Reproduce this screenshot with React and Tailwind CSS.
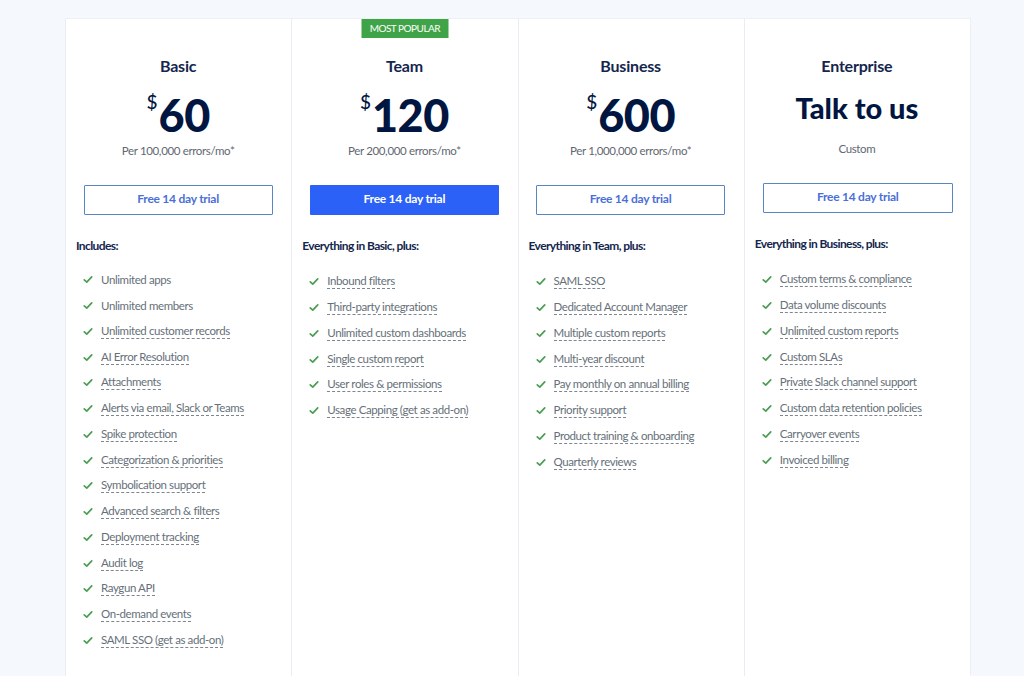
import React from "react";

const plans = [
  {
    name: "Basic",
    price: "60",
    note: "Per 100,000 errors/mo*",
    heading: "Includes:",
    plain: 2,
    items: [
      "Unlimited apps",
      "Unlimited members",
      "Unlimited customer records",
      "AI Error Resolution",
      "Attachments",
      "Alerts via email, Slack or Teams",
      "Spike protection",
      "Categorization & priorities",
      "Symbolication support",
      "Advanced search & filters",
      "Deployment tracking",
      "Audit log",
      "Raygun API",
      "On-demand events",
      "SAML SSO (get as add-on)",
    ],
  },
  {
    name: "Team",
    price: "120",
    note: "Per 200,000 errors/mo*",
    heading: "Everything in Basic, plus:",
    popular: true,
    items: [
      "Inbound filters",
      "Third-party integrations",
      "Unlimited custom dashboards",
      "Single custom report",
      "User roles & permissions",
      "Usage Capping (get as add-on)",
    ],
  },
  {
    name: "Business",
    price: "600",
    note: "Per 1,000,000 errors/mo*",
    heading: "Everything in Team, plus:",
    items: [
      "SAML SSO",
      "Dedicated Account Manager",
      "Multiple custom reports",
      "Multi-year discount",
      "Pay monthly on annual billing",
      "Priority support",
      "Product training & onboarding",
      "Quarterly reviews",
    ],
  },
  {
    name: "Enterprise",
    heading: "Everything in Business, plus:",
    custom: true,
    note: "Custom",
    items: [
      "Custom terms & compliance",
      "Data volume discounts",
      "Unlimited custom reports",
      "Custom SLAs",
      "Private Slack channel support",
      "Custom data retention policies",
      "Carryover events",
      "Invoiced billing",
    ],
  },
];

const Check = () => (
  <svg viewBox="0 0 12 10" className="w-[10px] h-[9px] shrink-0 mr-2 text-[#4a9d52]" fill="none" stroke="currentColor" strokeWidth="2" strokeLinecap="round" strokeLinejoin="round">
    <path d="M1.5 5.5L4.5 8.2L10.5 1.8" />
  </svg>
);

const PlanColumn = ({ plan }) => (
  <div className="relative w-1/4 h-[657px] overflow-hidden pl-[10px] pr-[11px] border-l border-[#e9edf3]">
    {plan.popular && (
      <div className="absolute top-0 left-1/2 -translate-x-1/2 w-[87px] h-[19px] bg-[#3fa447] text-white text-[10px] tracking-[-0.5px] leading-[19px] text-center whitespace-nowrap">
        MOST POPULAR
      </div>
    )}
    <h2 className="mt-[37px] text-center text-[16px] tracking-[-0.2px] leading-[20px] font-bold text-[#14264d]">{plan.name}</h2>
    {plan.custom ? (
      <div className="mt-[12px] h-[40px] text-center text-[29px] leading-[40px] font-black text-[#001641]">Talk to us</div>
    ) : (
      <div className="mt-[14px] h-[50px] flex justify-center text-[#001641]">
        <span className="text-[19px] leading-[20px] font-medium mt-[2px] mr-[1px]">$</span>
        <span className="text-[45px] tracking-[-0.5px] leading-[50px] font-black">{plan.price}</span>
      </div>
    )}
    <p className={`text-center text-[11.5px] tracking-[-0.35px] leading-[16px] text-[#5f6872] ${plan.custom ? "mt-[13px]" : "mt-[3px]"}`}>{plan.note}</p>
    <button
      type="button"
      className={`block h-[30px] pb-[3px] rounded-[1px] text-[12px] tracking-[-0.25px] font-bold mt-[26px] ${plan.custom ? "w-[190px] ml-[8px]" : "w-[189px] mx-auto"} ${
        plan.popular ? "bg-[#2b61f6] text-white" : "bg-white border border-[#5a84c8] text-[#4a6fd8]"
      }`}
    >
      Free 14 day trial
    </button>
    <h3 className="mt-[23px] text-[12px] tracking-[-0.6px] leading-[15px] font-bold text-[#14264d]">{plan.heading}</h3>
    <ul className={`${plan.name === "Basic" ? "mt-[14px]" : "mt-[16px]"} ml-[7px]`}>
      {plan.items.map((item, i) => (
        <li key={item} className="flex items-center h-[25.75px] text-[11.5px] tracking-[-0.4px] text-[#667079]">
          <Check />
          <span className={i < (plan.plain || 0) ? "" : "border-b border-dashed border-[#7d868e] leading-[14px]"}>{item}</span>
        </li>
      ))}
    </ul>
  </div>
);

export default function App() {
  return (
    <div className="h-[676px] overflow-hidden bg-[#f5f8fd] pt-[19px] pl-[65px] font-['Lato','Liberation_Sans',sans-serif]">
      <div className="flex w-[905px] bg-white shadow-[1px_-1px_0_0_#eceff4]">
        {plans.map((plan) => (
          <PlanColumn key={plan.name} plan={plan} />
        ))}
      </div>
    </div>
  );
}
